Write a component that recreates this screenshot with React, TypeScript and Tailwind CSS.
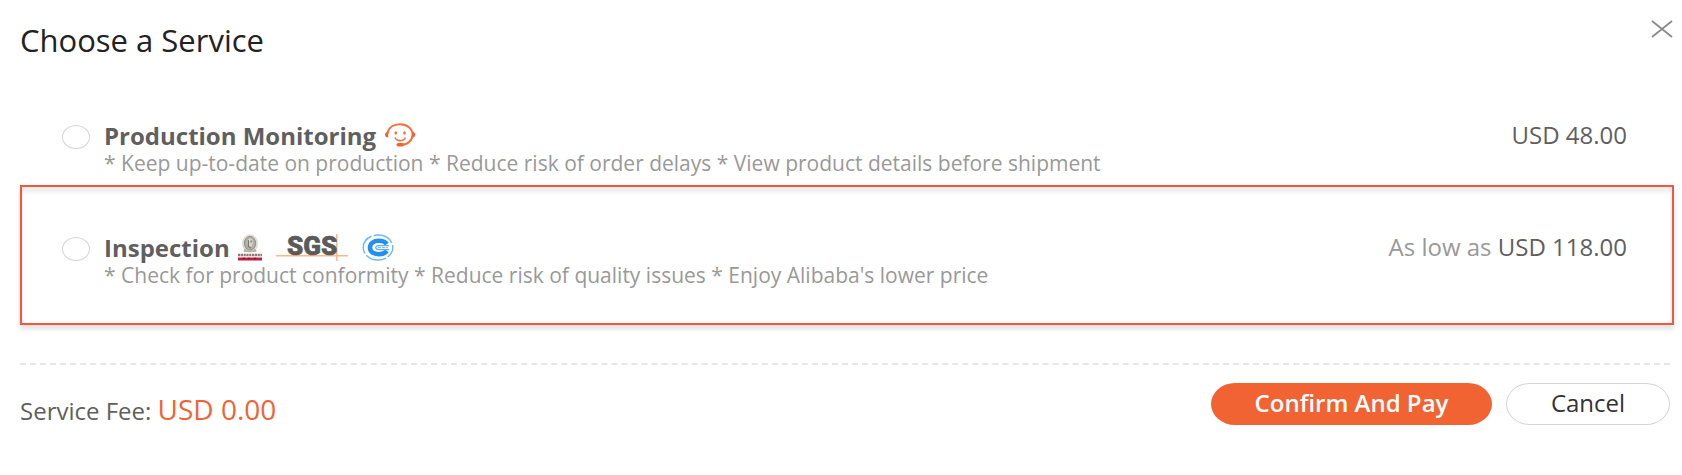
import { useState } from "react";

function CloseIcon() {
    return (
        <svg viewBox="0 0 22 18" className="w-[22px] h-[18px]" fill="none" stroke="#8a8a8a" strokeWidth="1.8" aria-hidden="true">
            <path d="M1 1 21 17M21 1 1 17" />
        </svg>
    );
}

function SupportIcon() {
    return (
        <svg viewBox="0 0 32 24" className="w-8 h-6" fill="none" stroke="#f4733d" aria-hidden="true">
            <path d="M3.600 10.500C4.500 4.500 9.500 1.300 16 1.300c7 0 12.600 4.300 12.600 10.200S23.500 22 16.500 22" strokeWidth="2" />
            <path d="M4.200 8.800c-4.200.2-4.200 5.600 0 5.800ZM28 8.800c4.400.2 4.400 5.600 0 5.800Z" fill="#f26334" stroke="none" />
            <rect x="12.500" y="20" width="7.500" height="3.600" rx="1.800" fill="#f26334" stroke="none" />
            <path d="M11 14.500c1.700 4.200 8.800 4.200 10.500 0" strokeWidth="1.600" />
            <ellipse cx="11.800" cy="10" rx="1.300" ry="1.700" fill="#f4733d" stroke="none" />
            <ellipse cx="20.500" cy="10" rx="1.300" ry="1.700" fill="#f4733d" stroke="none" />
        </svg>
    );
}

function BureauIcon() {
    return (
        <svg viewBox="0 0 24 27" className="w-6 h-[27px]" aria-hidden="true">
            <ellipse cx="12" cy="9.500" rx="8" ry="9.300" fill="#dddcd5" />
            <ellipse cx="12" cy="9.300" rx="5.600" ry="6.800" fill="#b3b1a6" stroke="#8f8d84" strokeWidth="1" />
            <path d="M12 4.200c2 0 3 1.600 2.500 3.500l1 1.200-1.200.8c.3 2-.6 3.300-2.300 3.300s-3-1.800-2.800-4.200S10.200 4.200 12 4.200Z" fill="#d5d4cd" />
            <path d="M10.400 6.300v6.200l2.600 1.600M13.200 6.400v2" stroke="#77756d" strokeWidth="1.200" fill="none" />
            <path d="M6 17.200h12M8 15l-2 2.600M16 15l2 2.600" stroke="#b5b3aa" strokeWidth="1.800" />
            <path d="M0 21h24" stroke="#8c7875" strokeWidth="2.600" strokeDasharray="2.200 .6" />
            <path d="M0 25h24" stroke="#c01e3c" strokeWidth="3" />
            <path d="M5 24.500h2M10 24.500h2M16 24.500h2" stroke="#8d1730" strokeWidth="1.500" />
        </svg>
    );
}

function SgsIcon() {
    return (
        <svg viewBox="0 0 72 27" className="w-[72px] h-[27px] overflow-visible" role="img" aria-label="SGS">
            <path d="M0 21.700h72M60.700 0v27" stroke="#fbb88a" strokeWidth="1.600" />
            <text x="11" y="21" fontSize="26" fontWeight="900" fill="#5a5a5a" stroke="#5a5a5a" strokeWidth=".6" className="font-['Roboto',sans-serif]">
                SGS
            </text>
        </svg>
    );
}

function CertIcon() {
    return (
        <svg viewBox="0 0 32 27" className="w-8 h-[27px]" fill="none" aria-hidden="true">
            <ellipse cx="16" cy="13.500" rx="14.800" ry="12.500" stroke="#6db8f6" strokeWidth="1.400" strokeDasharray="21 2.200" strokeDashoffset="10" />
            <path d="M25 10C23 7.700 20.300 6.800 16.800 6.800 11.300 6.800 8 9.700 8 13.500s3.300 6.700 8.800 6.700c3.500 0 6.200-.9 8.200-3.200" stroke="#258fee" strokeWidth="4.600" />
            <path d="M27 11.600H16.500c-3.600 0-3.600 4 0 4H27" stroke="#5fb0f4" strokeWidth="1.200" />
            <path d="M16 13.600h10" stroke="#7cbff6" strokeWidth="1.200" strokeDasharray="3 1" />
        </svg>
    );
}

const services = [
    {
        id: "monitoring",
        title: "Production Monitoring",
        description: "* Keep up-to-date on production * Reduce risk of order delays * View product details before shipment",
        prefix: "",
        price: "USD 48.00",
        icons: <SupportIcon />,
        frame: "h-28 border-transparent",
    },
    {
        id: "inspection",
        title: "Inspection",
        description: "* Check for product conformity * Reduce risk of quality issues * Enjoy Alibaba's lower price",
        prefix: "As low as ",
        price: "USD 118.00",
        icons: (
            <span className="flex items-center gap-[14px]">
                <BureauIcon />
                <SgsIcon />
                <CertIcon />
            </span>
        ),
        frame: "h-[140px] border-[#f4573a] shadow-[0_4px_5px_rgba(0,0,0,0.12),inset_0_5px_4px_rgba(0,0,0,0.08)]",
    },
];

export default function App() {
    const [selected, setSelected] = useState("");

    return (
        <main className="bg-white pl-5 pr-2 pb-12 font-['Open_Sans',sans-serif] text-[#5f5f5f]">
            {/* Header */}
            <header className="flex items-start justify-between h-[73px] pt-5">
                <h1 className="text-[31px] leading-10 text-[#222]">Choose a Service</h1>
                <button type="button" aria-label="Close" className="pr-px">
                    <CloseIcon />
                </button>
            </header>

            {/* Services */}
            <div role="radiogroup" aria-label="Service">
                {services.map((service) => (
                    <div key={service.id} className={`flex items-start justify-between border-2 pl-10 pr-[45px] pt-11 ${service.frame}`}>
                        <div className="flex items-start gap-[14px]">
                            <input
                                type="radio"
                                id={service.id}
                                name="service"
                                checked={selected === service.id}
                                onChange={() => setSelected(service.id)}
                                className="appearance-none mt-1.5 w-7 h-6 shrink-0 rounded-[50%] border border-[#d4d4d4] bg-white checked:border-8 checked:border-[#f26334]"
                            />
                            <div>
                                <label htmlFor={service.id} className="flex items-center gap-2 h-8 text-[24px] leading-8 font-bold">
                                    <span className="pt-px">{service.title}</span>
                                    {service.icons}
                                </label>
                                <p className="text-[21px] leading-6 text-[#999]">{service.description}</p>
                            </div>
                        </div>
                        <p className="text-[24px] leading-8 text-[#999] whitespace-nowrap">
                            {service.prefix}
                            <span className="text-[#5f5f5f]">{service.price}</span>
                        </p>
                    </div>
                ))}
            </div>

            {/* Footer */}
            <footer className="mt-[38px] mr-1 flex items-start justify-between border-t-2 border-dashed border-[#e6e6ec] pt-[18px]">
                <p className="pt-2 text-[24px] leading-9">
                    Service Fee: <span className="text-[28px] text-[#f26334]">USD 0.00</span>
                </p>
                <div className="flex gap-[14px] text-[24px] leading-9">
                    <button type="button" className="w-[281px] h-[42px] pb-0.5 rounded-[24px/21px] bg-[#f26334] font-semibold text-white">
                        Confirm And Pay
                    </button>
                    <button type="button" className="w-[164px] h-[42px] pb-0.5 rounded-[24px/21px] border border-[#d4d4d4] bg-white text-[#333]">
                        Cancel
                    </button>
                </div>
            </footer>
        </main>
    );
}
